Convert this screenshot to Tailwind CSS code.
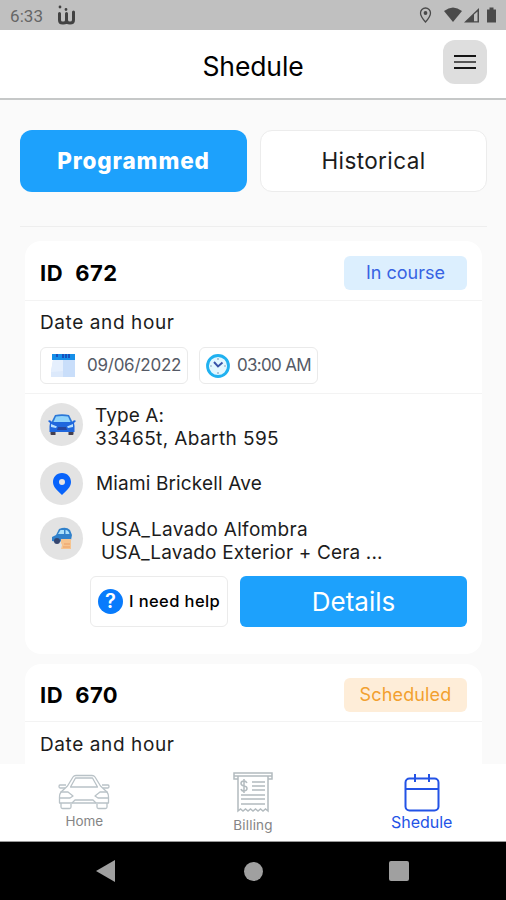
<!DOCTYPE html>
<html lang="en">
<head>
    <meta charset="UTF-8">
    <meta name="viewport" content="width=device-width, initial-scale=1.0">
    <title>Shedule</title>
    <script src="https://cdn.jsdelivr.net/npm/@tailwindcss/browser@4"></script>
</head>
<body class="bg-[#fafafa] font-['Inter','Liberation_Sans',sans-serif] text-[#1c1c1c]">
    <div class="w-[506px] h-[900px] flex flex-col overflow-hidden whitespace-nowrap">

        <!-- Status bar -->
        <div class="h-[30px] shrink-0 bg-[#c0c0c0] flex items-center justify-between pl-[10px] pr-2 text-[#666]">
            <div class="flex items-center">
                <span class="w-[47px] font-[Roboto,sans-serif] text-[17px] leading-[28px] tracking-[0.1px] pt-[2px]">6:33</span>
                <svg class="w-[20px] h-[22px]" viewBox="0 0 20 22" fill="none" stroke="#424242" stroke-width="3" stroke-linecap="round">
                    <path d="M2.500 9.500v6.500q0 3 3 3h1q3 0 3-3V9.500M9.500 16q0 3 3.500 3 3.500 0 3.500-3V8" />
                    <path d="M3 3v.1M9 5.500v.1" stroke-width="2.800" />
                </svg>
            </div>
            <svg class="w-[80px] h-[20px]" viewBox="0 0 80 20" fill="#4a4a4a">
                <path d="M7.500 3a5 5 0 0 0-5 5c0 3.500 5 9 5 9s5-5.500 5-9a5 5 0 0 0-5-5z" fill="none" stroke="#4a4a4a" stroke-width="1.300" />
                <circle cx="7.500" cy="8" r="1.900" />
                <path d="M26 6q9-7 18 0l-9 11z" />
                <path d="M46 17.500 61 3v14.500zM56 9.500v6.800h3.500V6.500z" fill-rule="evenodd" />
                <path d="M69 4.500h2.500V2.500h4v2H78v13h-9z" />
            </svg>
        </div>

        <!-- Header -->
        <header class="relative z-10 h-[70px] shrink-0 bg-white border-b-2 border-[#c6c8c8] grid grid-cols-[1fr_auto_1fr] items-center pl-[19px] pr-[19px]">
            <span></span>
            <h1 class="text-[26.5px] leading-[34px] tracking-[-0.1px] text-black pt-[4px]">Shedule</h1>
            <button class="justify-self-end w-11 h-11 mt-[-4px] rounded-xl bg-[#dedede] flex flex-col items-center justify-center gap-1">
                <span class="w-[22px] h-[2px] bg-[#151515]"></span>
                <span class="w-[22px] h-[2px] bg-[#555]"></span>
                <span class="w-[22px] h-[2px] bg-[#151515]"></span>
            </button>
        </header>

        <main class="flex-1 min-h-0 overflow-hidden px-5 pt-[30px]">
            <!-- Tabs -->
            <div class="flex gap-[13px] h-[62px] mr-[-1px]">
                <button class="w-[227px] rounded-xl bg-[#1da1fc] text-white font-extrabold text-[22.5px] tracking-[0.9px]">Programmed</button>
                <button class="w-[227px] rounded-xl bg-white border border-[#ececec] text-[22.5px] tracking-[0.4px]">Historical</button>
            </div>
            <div class="mt-[34px] mr-[-1px] h-px bg-[#eeeeee]"></div>

            <!-- Card 672 -->
            <section class="mt-[14px] ml-[5px] w-[457px] h-[413px] bg-white rounded-2xl">
                <div class="h-[60px] pl-[15px] pr-[15px] pt-[5px] flex items-center justify-between border-b border-[#f3f3f3]">
                    <h2 class="text-[22px] font-bold text-black flex gap-[12px] pt-px"><span class="tracking-[0.6px]">ID</span><span class="tracking-[0.4px]">672</span></h2>
                    <span class="w-[123px] h-[34px] rounded-md bg-[#dceffe] text-[#3763e3] text-[18px] leading-[34px] text-center">In course</span>
                </div>
                <div class="h-[93px] px-[15px] pt-[9px] border-b border-[#f3f3f3]">
                    <p class="text-[19px] leading-[26px] tracking-[0.6px]">Date and hour</p>
                    <div class="flex gap-[11px] mt-[11px] text-[17px] text-[#555a66]">
                        <div class="w-[148px] h-[37px] rounded-md border border-[#eaeaea] flex items-center pl-[9px] gap-[11px]">
                            <svg class="w-[26px] h-[26px]" viewBox="0 0 26 26">
                                <path d="M3 7h22v17H1V18z" fill="#dce9fb" />
                                <path d="M13 7h12v17H13z" fill="#c9defa" />
                                <path d="M3 7h10v11l-12 1z" fill="#e5effd" />
                                <path d="M2 1h23v6H2z" fill="#168ee8" />
                                <path d="M7 1v3M13 1v4M16 1v4M19 1v4" stroke="#1a3cae" stroke-width="1.500" />
                            </svg>
                            <span class="tracking-[-0.25px]">09/06/2022</span>
                        </div>
                        <div class="w-[119px] h-[37px] rounded-md border border-[#eaeaea] flex items-center pl-[6px] gap-[7px]">
                            <svg class="w-6 h-6" viewBox="0 0 24 24" fill="none">
                                <circle cx="12" cy="12" r="10.500" fill="#e2f7ff" stroke="#20b1f0" stroke-width="2.800" />
                                <path d="M12 4v2M12 18v2M4 12h2M18 12h2" stroke="#8ba3bd" stroke-width="1.200" />
                                <path d="m8 8 4 4.500 4.500-4" stroke="#3852a8" stroke-width="1.900" />
                            </svg>
                            <span class="tracking-[-0.7px]">03:00 AM</span>
                        </div>
                    </div>
                </div>

                <div class="px-[15px] pt-[9px]">
                    <div class="flex gap-[12px] h-[59px]">
                        <span class="w-[43px] h-[43px] rounded-full bg-[#e3e3e3] flex items-center justify-center">
                            <svg class="w-[28px] h-[24px]" viewBox="0 0 28 24">
                                <path d="M2.500 17h5v5h-4q-1 0-1-1zM20.500 17h5v4q0 1-1 1h-4z" fill="#443f4f" />
                                <path d="M7 2q7-1.500 14 0l3.500 7H3.500z" fill="#2b78d8" />
                                <path d="M8 3.500q6-1 12 0l2.500 5.500h-17z" fill="#91d4fb" />
                                <path d="M0 8q2-2 4 1h20q2-3 4-1l-2 2 .5 3v6h-25v-6l.5-3z" fill="#1f67dd" />
                                <path d="m3 11 6 2.500-1 1.500-5-1zM25 11l-6 2.500 1 1.500 5-1z" fill="#b9e1ff" />
                                <path d="M10 14h8l1 3H9z" fill="#25449c" />
                            </svg>
                        </span>
                        <p class="text-[19px] leading-[23px] pt-px"><span class="tracking-[0.1px]">Type A:</span><br><span class="tracking-[0.4px]">33465t, Abarth 595</span></p>
                    </div>
                    <div class="flex gap-[12px] h-[55px]">
                        <span class="w-[43px] h-[43px] rounded-full bg-[#e3e3e3] flex items-center justify-center">
                            <svg class="w-5 h-6" viewBox="0 0 20 24"><path d="M10 1C4.500 1 1 5 1 10c0 5.500 5 9 9 13 4-4 9-7.500 9-13 0-5-3.500-9-9-9zm0 6a3 3 0 1 1 0 6 3 3 0 0 1 0-6z" fill="#0763fb" fill-rule="evenodd" /></svg>
                        </span>
                        <p class="text-[19px] leading-[43px] tracking-[0.15px] pl-px">Miami Brickell Ave</p>
                    </div>
                    <div class="flex gap-[12px] h-[59px]">
                        <span class="w-[43px] h-[43px] rounded-full bg-[#e3e3e3] flex items-center justify-center">
                            <svg class="w-[22px] h-[24px]" viewBox="0 0 22 24">
                                <path d="M5 8 8 2q7-3 11 1l2 5-1 5-14 2-5-1V10z" fill="#3181cb" />
                                <path d="m7 7 2.500-4H13v4zM14.500 3q3 0 4 4h-4z" fill="#ace0fa" />
                                <circle cx="6" cy="14" r="3" fill="#35466f" />
                                <path d="M10 12h10v10H10l1-4-1-2z" fill="#f6c48f" />
                                <path d="M13 17h6M12 20h7" stroke="#ec9f67" />
                            </svg>
                        </span>
                        <p class="text-[19px] leading-[23px] pl-[6px] pt-px"><span class="tracking-[0.3px]">USA_Lavado Alfombra</span><br><span class="tracking-[0.15px]">USA_Lavado Exterior + Cera ...</span></p>
                    </div>
                    <div class="flex gap-3 h-[51px] pl-[50px]">
                        <button class="w-[138px] rounded-md border border-[#ebebeb] flex items-center pl-[7px] gap-[6px] text-[16.5px] font-medium text-black">
                            <span class="w-[25px] h-[25px] rounded-full bg-[#087bfc] text-white text-[20px] leading-[25px] font-semibold">?</span>
                            <span class="tracking-[0.4px]">I need help</span>
                        </button>
                        <button class="w-[227px] rounded-md bg-[#1da1fc] text-white text-[26px]">Details</button>
                    </div>
                </div>
            </section>

            <!-- Card 670 -->
            <section class="mt-[10px] ml-[5px] w-[457px] h-[413px] bg-white rounded-2xl">
                <div class="h-[58px] pl-[15px] pr-[15px] pt-[5px] flex items-center justify-between border-b border-[#f3f3f3]">
                    <h2 class="text-[22px] font-bold text-black flex gap-[12px] pt-px"><span class="tracking-[0.6px]">ID</span><span class="tracking-[0.4px]">670</span></h2>
                    <span class="w-[123px] h-[34px] rounded-md bg-[#feedd8] text-[#f2a02f] text-[18px] leading-[34px] tracking-[0.15px] text-center">Scheduled</span>
                </div>
                <div class="px-[15px] pt-[10px]">
                    <p class="text-[19px] leading-[26px] tracking-[0.6px]">Date and hour</p>
                </div>
            </section>
        </main>

        <!-- Bottom tabs -->
        <nav class="h-[78px] shrink-0 bg-white border-b border-[#999] grid grid-cols-3 text-center">
            <a href="#" class="flex flex-col items-center pt-[10px] text-[13.5px] leading-[16px] text-[#858585]">
                <svg class="w-[52px] h-[36px] mb-[3px]" viewBox="0 0 52 36" fill="none" stroke="#b9c2c7" stroke-width="1.300" stroke-linejoin="round">
                    <path d="M9.500 12 15 3q1-1.500 3-1.500h16q2 0 3 1.500l5.500 9M12.500 13l5-9h17l5 9zM9.500 12 3 18q-1.500 2-1.500 5v6h49v-6q0-3-1.500-5l-6.500-6" />
                    <path d="M8 11H2q-1 0-1 1.500T2 14h5M44 11h6q1 0 1 1.500T50 14h-5" />
                    <path d="M2.500 18H10l5 4-3 2H2M49.500 18H42l-5 4 3 2h10" />
                    <path d="M3 29v4q0 1.500 1.500 1.500h7Q13 34.500 13 33v-3M49 29v4q0 1.500-1.500 1.500h-7Q39 34.500 39 33v-3M14 29l3-3h18l3 3" />
                </svg>
                <span>Home</span>
            </a>
            <a href="#" class="flex flex-col items-center pt-[8px] text-[13.5px] leading-[16px] tracking-[0.2px] text-[#858585]">
                <svg class="w-[40px] h-[42px] mb-[3px]" viewBox="0 0 40 42" fill="none" stroke="#b3bbbf" stroke-width="1.500">
                    <path d="M5 7H1V1h38v6h-4M1 4h38" />
                    <path d="M5 4v35l2.500-2 2.500 2 2.500-2 2.500 2 2.500-2 2.500 2 2.500-2 2.500 2 2.500-2 2.500 2 2.500-2 2.500 2V4" />
                    <path d="M19 10h13M19 14h13M19 18h13M8 23h24M8 27h24M8 32h24" />
                    <path d="M14 11q-1-2-3-2-3 0-3 2.300T11 14t3 2.500T11 19q-2.500 0-3-2M11 7v14" />
                </svg>
                <span>Billing</span>
            </a>
            <a href="#" class="flex flex-col items-center pt-[9px] text-[16px] leading-[18px] text-[#2353e6]">
                <svg class="w-[36px] h-[39px] mb-px" viewBox="0 0 36 39" fill="none" stroke="#2353e6" stroke-width="2">
                    <rect x="1.500" y="5.500" width="33" height="32" rx="4" />
                    <path d="M1.500 16h33M11 1v8M25 1v8" />
                </svg>
                <span>Shedule</span>
            </a>
        </nav>

        <!-- System navigation -->
        <div class="h-[58px] shrink-0 bg-black flex items-center justify-between pl-[96px] pr-[97px]">
            <svg class="w-[19px] h-[22px]" viewBox="0 0 19 22"><path d="M0 11 19 0v22z" fill="#a0a0a0" /></svg>
            <span class="w-[19px] h-[19px] ml-[2px] rounded-full bg-[#a0a0a0]"></span>
            <span class="w-[20px] h-[20px] rounded-[2px] bg-[#a0a0a0]"></span>
        </div>
    </div>
</body>
</html>
